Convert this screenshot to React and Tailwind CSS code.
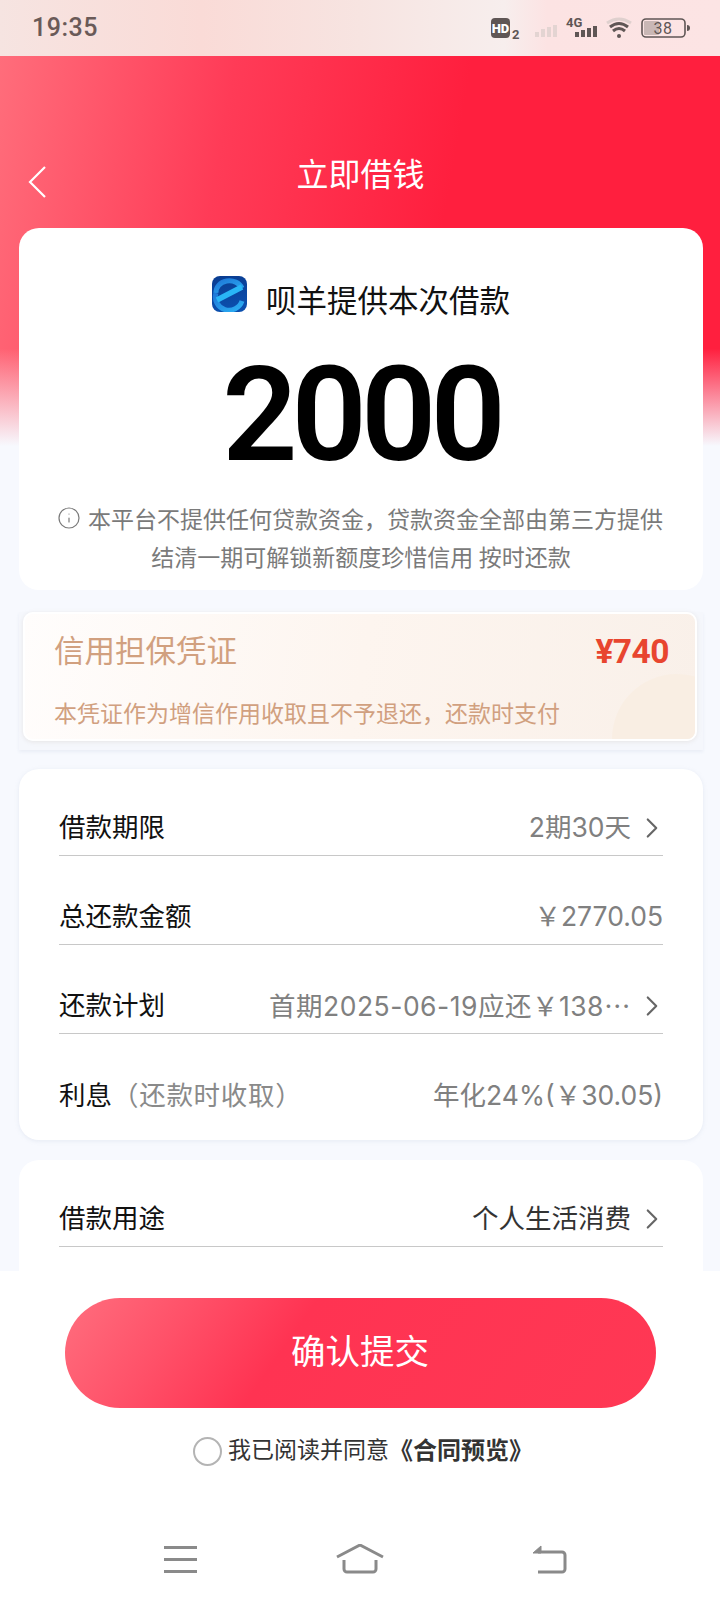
import { ChevronRight, Info } from 'lucide-react'

const FONT = "font-['Roboto','Noto_Sans_CJK_SC',sans-serif]"

function StatusBar() {
  return (
    <div className="h-[56px] shrink-0 flex items-center justify-between pl-[32px] pr-[32px] bg-[linear-gradient(90deg,#f6e4e1_0%,#fadbd7_28%,#f7e4e1_50%,#f7eeed_70%,#fce3e3_76%,#fce4e4_100%)]">
      <span className="text-[25px] font-medium text-[#6a5a58] tracking-[0.5px]">19:35</span>
      <svg width="200" height="28" viewBox="0 0 200 28" className="mr-[-3px] mt-[4px]">
        <rect x="0" y="2" width="19" height="20" rx="4" fill="#5f5655" />
        <text x="9.5" y="17" textAnchor="middle" fontSize="13" fontWeight="900" fill="#fff" fontFamily="Roboto">HD</text>
        <text x="21" y="23" fontSize="13" fontWeight="700" fill="#5f5655" fontFamily="Roboto">2</text>
        <g fill="#e3d4d2">
          <rect x="44" y="16" width="4" height="5" />
          <rect x="50" y="13" width="4" height="8" />
          <rect x="56" y="11" width="4" height="10" />
          <rect x="62" y="9" width="4" height="12" />
        </g>
        <text x="75" y="11" fontSize="13" fontWeight="700" fill="#5f5655" fontFamily="Roboto">4G</text>
        <g fill="#5f5655">
          <rect x="84" y="16" width="4" height="5" />
          <rect x="90" y="14" width="4" height="7" />
          <rect x="96" y="12" width="4" height="9" />
          <rect x="102" y="10" width="4" height="11" />
        </g>
        <path d="M116 7 Q128 -1 140 7" fill="none" stroke="#dfd0ce" strokeWidth="3" />
        <path d="M119 11 Q128 4 137 11" fill="none" stroke="#5f5655" strokeWidth="3" />
        <path d="M122 15 Q128 10 134 15" fill="none" stroke="#5f5655" strokeWidth="3" />
        <circle cx="128" cy="20" r="2" fill="#5f5655" />
        <rect x="151" y="3" width="43" height="18" rx="4" fill="none" stroke="#5f5655" strokeWidth="1.6" />
        <rect x="153" y="5" width="15" height="14" rx="1" fill="#c9b7b5" />
        <path d="M196 9 a3 3 0 0 1 0 6 z" fill="#5f5655" />
        <text x="172" y="17.5" textAnchor="middle" fontSize="16" fill="#5f5655" fontFamily="Roboto" letterSpacing="0.5">38</text>
      </svg>
    </div>
  )
}

function Logo() {
  return (
    <svg width="35" height="36" viewBox="0 0 35 36" className="shrink-0">
      <defs>
        <linearGradient id="logoBg" x1="0" y1="0" x2="0.2" y2="1">
          <stop offset="0" stopColor="#0a3c90" />
          <stop offset="1" stopColor="#0b4fae" />
        </linearGradient>
        <linearGradient id="logoRing" x1="0" y1="0" x2="1" y2="1">
          <stop offset="0" stopColor="#1f78d8" />
          <stop offset="1" stopColor="#2cb0f4" />
        </linearGradient>
      </defs>
      <rect width="35" height="36" rx="8" fill="url(#logoBg)" />
      <path d="M30 12 A13.5 11.5 0 0 0 4 17" fill="none" stroke="url(#logoRing)" strokeWidth="5" />
      <path d="M4 17 A13.5 13 0 0 0 30 25" fill="none" stroke="url(#logoRing)" strokeWidth="5" />
      <path d="M5 24 L30 11" fill="none" stroke="#29b6f6" strokeWidth="5.5" />
    </svg>
  )
}

function Row({ label, note, value, arrow, className }) {
  return (
    <div className={`h-[89px] first:h-[87px] mx-[40px] flex items-end border-b-[1.5px] border-[#c8c8c8] last:border-b-0 ${className || ''}`}>
      <div className="h-[54px] w-full flex items-center justify-between text-[26.5px]">
        <div className="shrink-0 text-[#111]">
          {label}
          {note && <span className="tracking-[0.7px] text-[#8a8a8a]">{note}</span>}
        </div>
        <div className="flex items-center min-w-0 text-[#808080] font-['Inter','Noto_Sans_CJK_SC',sans-serif]">
          <span className="whitespace-nowrap">{value}</span>
          {arrow && <ChevronRight size={34} strokeWidth={1.5} className="shrink-0 ml-[4px] mr-[-6px] text-[#666]" />}
        </div>
      </div>
    </div>
  )
}

export default function App() {
  return (
    <div className={`w-[720px] h-[1600px] flex flex-col overflow-hidden bg-white ${FONT}`}>
      <StatusBar />

      <div className="flex-1 min-h-0 overflow-hidden pl-[19px] pr-[17px] bg-[#f7f9fe] bg-no-repeat bg-[length:100%_390px] bg-[linear-gradient(180deg,rgba(247,249,254,0)_0%,rgba(247,249,254,0)_75%,rgba(247,249,254,1)_100%),linear-gradient(100deg,#ff6d7b_0%,#ff3b57_30%,#ff1f3e_60%,#ff1f3e_100%)]">
        <div className="h-[172px] grid grid-cols-[1fr_auto_1fr] pt-[99px] content-start text-white">
          <svg width="20" height="32" viewBox="0 0 20 32" fill="none" stroke="currentColor" strokeWidth="2.2" className="ml-[9px] mt-[11px]">
            <path d="M17 1 L2 16 L17 31" />
          </svg>
          <div className="text-[32px] leading-[40px] ml-[-1px]">立即借钱</div>
        </div>

        <div className="h-[362px] bg-white rounded-[20px] flex flex-col items-center pt-[48px]">
          <div className="flex items-start">
            <Logo />
            <span className="ml-[19px] mt-[6px] text-[30.5px] leading-[40px] text-[#111]">呗羊提供本次借款</span>
          </div>
          <div className="mt-[18px] text-[132px] leading-[150px] font-semibold tracking-[-6px] text-black">2000</div>
          <div className="mt-[12px] text-[23px] leading-[38px] text-[#7a7a7a] text-center">
            <div className="flex items-center">
              <Info size={24} strokeWidth={1.2} className="mr-[7px] ml-[-2px] mt-[-6px]" />
              本平台不提供任何贷款资金，贷款资金全部由第三方提供
            </div>
            <div>结清一期可解锁新额度珍惜信用 按时还款</div>
          </div>
        </div>

        <div className="mt-[22px] h-[138px] bg-[#f5f7fc] pl-[4px] pr-[6px] pb-[9px] shadow-[0_2px_3px_rgba(205,212,228,0.3)]">
          <div className="relative h-full overflow-hidden rounded-[10px] border-2 border-white shadow-[0_1px_4px_rgba(200,190,180,0.3)] bg-[linear-gradient(100deg,#fffdfc_0%,#fdf5ef_50%,#f9f0e9_100%)] pl-[29px] pr-[26px] pt-[16px]">
            <div className="flex items-center justify-between h-[44px]">
              <span className="text-[30.5px] text-[#d1a07f]">信用担保凭证</span>
              <span className="relative z-10 text-[33.5px] font-bold text-[#e8452f] tracking-[-0.5px]">¥740</span>
            </div>
            <div className="relative z-10 mt-[25px] text-[23px] leading-[32px] text-[#d1a07f]">本凭证作为增信作用收取且不予退还，还款时支付</div>
            <div className="absolute right-[-47px] bottom-[-65px] w-[130px] h-[130px] rounded-full bg-[#f9eee3]" />
          </div>
        </div>

        <div className="mt-[19px] bg-white rounded-[20px] pb-[17px] shadow-[0_1px_4px_rgba(180,190,210,0.25)]">
          <Row label="借款期限" value="2期30天" arrow />
          <Row label="总还款金额" value="￥2770.05" />
          <Row
            label="还款计划"
            value={
              <span className="tracking-[0.5px]">
                首期2025-06-19应还￥138<span className="font-['Noto_Sans_CJK_SC',sans-serif]">…</span>
              </span>
            }
            arrow
          />
          <Row label="利息" note="（还款时收取）" value="年化24%(￥30.05)" />
        </div>

        <div className="mt-[20px] h-[200px] bg-white rounded-[20px]">
          <Row label="借款用途" value={<span className="text-[#333]">个人生活消费</span>} arrow className="!border-b-[1.5px]" />
        </div>
      </div>

      <div className="h-[329px] shrink-0 bg-white flex flex-col items-center pt-[27px]">
        <div className="w-[591px] h-[110px] rounded-full flex items-center justify-center text-[34.5px] text-white bg-[linear-gradient(125deg,#ff6e7e_0%,#ff5068_20%,#ff3352_38%,#ff3854_100%)]">
          确认提交
        </div>
        <div className="mt-[25px] ml-[6px] flex items-center text-[23px] text-[#333]">
          <span className="w-[29px] h-[29px] rounded-full border-2 border-[#b4b4b4] mr-[6px]" />
          我已阅读并同意
          <span className="font-bold text-[24px]">《合同预览》</span>
        </div>
        <div className="mt-[75px] self-start ml-[164px] flex items-center">
          <svg width="34" height="30" viewBox="0 0 34 30" fill="#8a8a8a">
            <rect x="0" y="2" width="33" height="3" />
            <rect x="0" y="14" width="33" height="3" />
            <rect x="0" y="26" width="33" height="3" />
          </svg>
          <svg width="48" height="30" viewBox="0 0 48 30" fill="none" stroke="#8a8a8a" strokeWidth="3" className="ml-[138px]">
            <path d="M1 13 L24 1 L47 13" strokeLinejoin="round" />
            <path d="M8 16 V25 a3 3 0 0 0 3 3 H37 a3 3 0 0 0 3 -3 V16" />
          </svg>
          <svg width="35" height="30" viewBox="0 0 35 30" fill="none" className="ml-[148px]">
            <path d="M1 9 L9 2 V9 Z" fill="#8a8a8a" stroke="#8a8a8a" />
            <path d="M6 8 H30 a3 3 0 0 1 3 3 V25 a3 3 0 0 1 -3 3 H6" stroke="#8a8a8a" strokeWidth="3" />
          </svg>
        </div>
      </div>
    </div>
  )
}
